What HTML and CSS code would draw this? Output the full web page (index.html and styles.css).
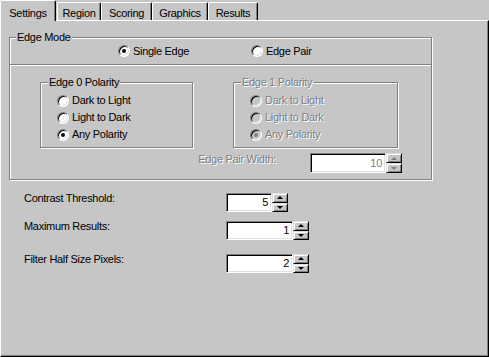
FILE: index.html
```html
<!DOCTYPE html>
<html lang="en">
<head>
  <meta charset="UTF-8" />
  <title>Settings</title>
  <link rel="stylesheet" href="styles.css">
</head>
<body>
  <div class="tabs">
    <div class="tab active" style="width: 56px">Settings</div>
    <div class="tab" style="width: 44px; margin-left: 1px">Region</div>
    <div class="tab" style="width: 51px">Scoring</div>
    <div class="tab" style="width: 56px">Graphics</div>
    <div class="tab" style="width: 50px">Results</div>
  </div>

  <div class="page">
    <div class="group edge-mode">
      <span class="group-title">Edge Mode</span>
      <div class="mode-row">
        <label class="option first"><span class="radio checked"></span>Single Edge</label>
        <label class="option"><span class="radio"></span>Edge Pair</label>
      </div>
      <div class="divider"></div>

      <div class="polarity-row">
        <div class="group polarity edge0">
          <span class="group-title">Edge 0 Polarity</span>
          <div class="options">
            <label class="option"><span class="radio"></span>Dark to Light</label>
            <label class="option"><span class="radio"></span>Light to Dark</label>
            <label class="option"><span class="radio checked"></span>Any Polarity</label>
          </div>
        </div>
        <div class="group polarity edge1 disabled">
          <span class="group-title">Edge 1 Polarity</span>
          <div class="options">
            <label class="option"><span class="radio"></span>Dark to Light</label>
            <label class="option"><span class="radio"></span>Light to Dark</label>
            <label class="option"><span class="radio checked"></span>Any Polarity</label>
          </div>
        </div>
      </div>

      <div class="pair-row disabled">
        <span class="pair-label">Edge Pair Width:</span>
        <div class="spin-field">
          <div class="textbox" style="width: 76px">10</div>
          <div class="spinner"><span class="up"></span><span class="down"></span></div>
        </div>
      </div>
    </div>

    <div class="params">
      <div class="param">
        <span class="param-label">Contrast Threshold:</span>
        <div class="spin-field">
          <div class="textbox" style="width: 46px">5</div>
          <div class="spinner"><span class="up"></span><span class="down"></span></div>
        </div>
      </div>
      <div class="param">
        <span class="param-label">Maximum Results:</span>
        <div class="spin-field">
          <div class="textbox" style="width: 67px">1</div>
          <div class="spinner"><span class="up"></span><span class="down"></span></div>
        </div>
      </div>
      <div class="param">
        <span class="param-label">Filter Half Size Pixels:</span>
        <div class="spin-field">
          <div class="textbox" style="width: 67px">2</div>
          <div class="spinner"><span class="up"></span><span class="down"></span></div>
        </div>
      </div>
    </div>
  </div>
</body>
</html>
```

FILE: styles.css
```css
* {
  box-sizing: border-box;
}
body {
  margin: 0;
  width: 489px;
  height: 357px;
  overflow: hidden;
  background: #c6c6c6;
  font-family: "Liberation Sans", Arial, sans-serif;
  font-size: 11px;
  line-height: 13px;
  letter-spacing: -0.3px;
  color: #000;
}

/* tab strip */
.tabs {
  display: flex;
  align-items: flex-end;
  height: 20px;
}
.tab {
  height: 18px;
  padding-top: 4px;
  text-align: center;
  background: #c6c6c6;
  border-top: 1px solid #fff;
  border-left: 1px solid #fff;
  border-right: 1px solid #000;
  border-radius: 2px 2px 0 0;
  box-shadow: inset -1px 0 #808080;
}
.tab.active {
  position: relative;
  z-index: 1;
  height: 21px;
  margin-bottom: -1px;
  padding-top: 6px;
}

/* page */
.page {
  height: 337px;
  padding: 16px 0 0 8px;
  border: 1px solid;
  border-color: #fff #000 #000 #fff;
  box-shadow: inset -1px -1px #808080;
}

/* group boxes */
.group {
  border: 1px solid #808080;
  box-shadow: inset 1px 1px #fff, 1px 1px #fff;
}
.group-title {
  display: block;
  width: max-content;
  height: 13px;
  margin: -7px 0 0 6px;
  padding: 0 1px;
  background: #c6c6c6;
}
.edge-mode {
  width: 423px;
  height: 143px;
}
.mode-row {
  display: flex;
  align-items: center;
  height: 14px;
  padding-left: 108px;
}
.mode-row .first {
  width: 133px;
}
.divider {
  margin-top: 6px;
  border-top: 1px solid #808080;
  border-bottom: 1px solid #fff;
}

.polarity-row {
  display: flex;
  margin-top: 16px;
  padding-left: 30px;
}
.polarity {
  height: 66px;
}
.polarity .group-title {
  margin-left: 7px;
}
.edge0 {
  width: 153px;
}
.edge1 {
  width: 165px;
  margin-left: 40px;
}
.options {
  padding: 3px 0 0 16px;
}
.options .option {
  height: 17px;
}

/* radio buttons */
.option {
  display: flex;
  align-items: center;
  gap: 3px;
}
.radio {
  position: relative;
  flex: none;
  width: 12px;
  height: 12px;
  border-radius: 50%;
  border: 1px solid;
  border-color: #808080 #fff #fff #808080;
  background: #fff;
  box-shadow: inset 1px 1px #000, inset -1px -1px #dfdfdf;
}
.radio.checked::after {
  content: "";
  position: absolute;
  left: 3px;
  top: 3px;
  width: 4px;
  height: 4px;
  border-radius: 50%;
  background: #000;
}

/* disabled look */
.disabled {
  color: #808080;
  text-shadow: 1px 1px #fff;
}
.disabled .radio {
  background: #c6c6c6;
}
.disabled .radio.checked::after {
  background: #808080;
}

/* spin edits */
.pair-row {
  display: flex;
  justify-content: flex-end;
  align-items: flex-start;
  margin-top: 5px;
  padding-right: 29px;
}
.pair-label {
  margin-right: 34px;
}
.spin-field {
  display: flex;
  height: 20px;
}
.textbox {
  display: flex;
  align-items: center;
  justify-content: flex-end;
  padding-right: 3px;
  background: #fff;
  border: 1px solid;
  border-color: #808080 #fff #fff #808080;
  box-shadow: inset 1px 1px #000, inset -1px -1px #dfdfdf;
}
.spinner {
  display: flex;
  flex-direction: column;
  width: 16px;
}
.spinner span {
  flex: 1;
  display: flex;
  align-items: center;
  justify-content: center;
  background: #c6c6c6;
  border: 1px solid;
  border-color: #dfdfdf #000 #000 #dfdfdf;
  box-shadow: inset 1px 1px #fff, inset -1px -1px #808080;
}
.spinner span::before {
  content: "";
  border-left: 3px solid transparent;
  border-right: 3px solid transparent;
}
.spinner .up::before {
  border-bottom: 3px solid #000;
}
.spinner .down::before {
  border-top: 3px solid #000;
}
.disabled .spinner .up::before {
  border-bottom-color: #808080;
}
.disabled .spinner .down::before {
  border-top-color: #808080;
}

/* parameters below the group */
.params {
  padding-left: 15px;
}
.param {
  display: flex;
  align-items: flex-start;
}
.param .spin-field {
  height: 19px;
}
.param:nth-child(1) {
  margin-top: 13px;
}
.param:nth-child(2) {
  margin-top: 9px;
}
.param:nth-child(3) {
  margin-top: 14px;
}
.param-label {
  width: 202px;
  margin-top: -1px;
}
```
